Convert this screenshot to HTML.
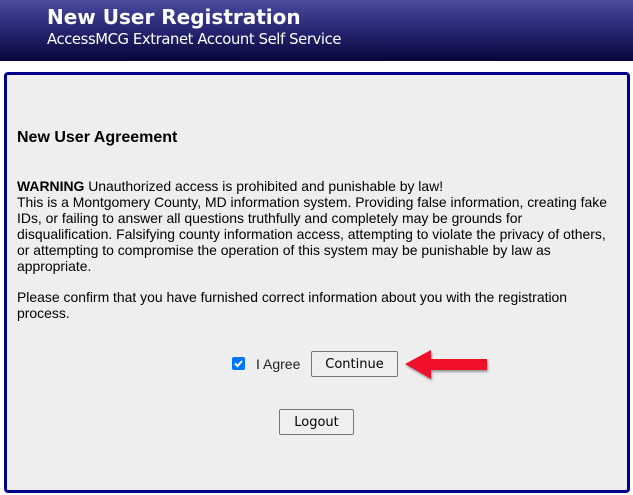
<!DOCTYPE html>
<html><head><style>
body{margin:0;width:633px;height:495px;background:#fff;font-family:"Liberation Sans",Arial,sans-serif;position:relative;overflow:hidden}
.hdr{position:absolute;left:0;top:0;width:633px;height:61px;background:linear-gradient(#4b4b9f,#252572 50%,#07073a)}
.h1{position:absolute;left:47px;top:5px;color:#fff;font:bold 20px "DejaVu Sans",sans-serif;letter-spacing:0px}
.h2{position:absolute;left:47px;top:31px;color:#fff;font:14.8px "DejaVu Sans",sans-serif;letter-spacing:-0.4px}
.panel{position:absolute;left:4px;top:72px;width:620px;height:415px;background:#eee;border:3px solid #00008b;border-radius:4px}
.t{position:absolute;left:17px;font-size:13.95px;line-height:16px;color:#000;white-space:nowrap}
.btn{position:absolute;background:#efefef;border:1px solid #767676;border-radius:2px;font:13px "DejaVu Sans",sans-serif;text-align:center;box-sizing:border-box;color:#000}
</style></head><body>
<div class="hdr"><div class="h1">New User Registration</div><div class="h2">AccessMCG Extranet Account Self Service</div></div>
<div class="panel"></div>
<div class="t" style="top:130px;font-weight:bold;font-size:16px">New User Agreement</div>
<div class="t" style="top:178px"><b>WARNING</b> Unauthorized access is prohibited and punishable by law!<br>This is a Montgomery County, MD information system. Providing false information, creating fake<br>IDs, or failing to answer all questions truthfully and completely may be grounds for<br>disqualification. Falsifying county information access, attempting to violate the privacy of others,<br>or attempting to compromise the operation of this system may be punishable by law as<br>appropriate.</div>
<div class="t" style="top:289px">Please confirm that you have furnished correct information about you with the registration<br>process.</div>
<div style="position:absolute;left:232px;top:357px;width:13px;height:13px;background:#0075ff;border-radius:2px"><svg width="13" height="13"><path d="M3 6.5l2.5 2.5L10 4" stroke="#fff" stroke-width="2" fill="none"/></svg></div>
<div class="t" style="left:256px;top:356px;font-size:14px;color:#222">I Agree</div>
<div class="btn" style="left:311px;top:351px;width:87px;height:26px;line-height:26px">Continue</div>
<div class="btn" style="left:279px;top:409px;width:75px;height:26px;line-height:26px">Logout</div>
<svg style="position:absolute;left:400px;top:345px" width="92" height="40"><path d="M5 19L31 5V14H87V25H31V34Z" fill="#f0102a" style="filter:drop-shadow(1px 2px 1px rgba(0,0,0,.35))"/></svg>
</body></html>
